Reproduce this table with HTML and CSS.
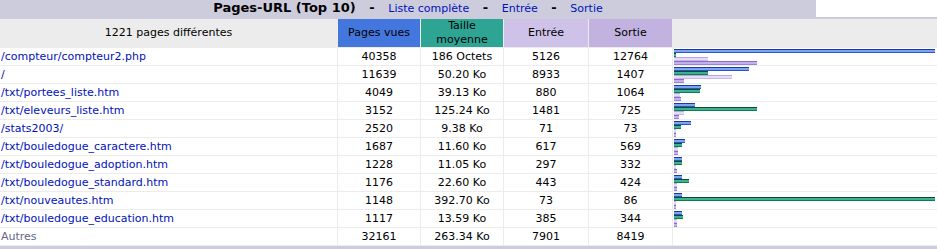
FILE: index.html
```html
<!DOCTYPE html>
<html lang="fr">
<head>
<meta charset="utf-8">
<title>Pages-URL (Top 10)</title>
<link rel="stylesheet" href="styles.css">
</head>
<body>
<div class="section">
  <div class="titlebar">
    <div class="title">Pages-URL (Top 10) &nbsp; - &nbsp; <a href="#">Liste complète</a> &nbsp; - &nbsp; <a href="#">Entrée</a> &nbsp; - &nbsp; <a href="#">Sortie</a></div>
    <div class="blank"></div>
  </div>
  <div class="data">
    <div class="hcell first">1221 pages différentes</div>
    <div class="hcell pages">Pages vues</div>
    <div class="hcell size">Taille<br>moyenne</div>
    <div class="hcell entry">Entrée</div>
    <div class="hcell exit">Sortie</div>
    <div class="hcell graph"></div>

    <div class="cell url"><a href="#">/compteur/compteur2.php</a></div><div class="cell">40358</div><div class="cell">186 Octets</div><div class="cell">5126</div><div class="cell">12764</div>
    <div class="cell bars"><span class="bar bp" style="width:261px"></span><span class="bar bk" style="width:2px"></span><span class="bar be" style="width:34px"></span><span class="bar bx" style="width:83px"></span></div>

    <div class="cell url"><a href="#">/</a></div><div class="cell">11639</div><div class="cell">50.20 Ko</div><div class="cell">8933</div><div class="cell">1407</div>
    <div class="cell bars"><span class="bar bp" style="width:75px"></span><span class="bar bk" style="width:34px"></span><span class="bar be" style="width:58px"></span><span class="bar bx" style="width:10px"></span></div>

    <div class="cell url"><a href="#">/txt/portees_liste.htm</a></div><div class="cell">4049</div><div class="cell">39.13 Ko</div><div class="cell">880</div><div class="cell">1064</div>
    <div class="cell bars"><span class="bar bp" style="width:27px"></span><span class="bar bk" style="width:26px"></span><span class="bar be" style="width:6px"></span><span class="bar bx" style="width:7px"></span></div>

    <div class="cell url"><a href="#">/txt/eleveurs_liste.htm</a></div><div class="cell">3152</div><div class="cell">125.24 Ko</div><div class="cell">1481</div><div class="cell">725</div>
    <div class="cell bars"><span class="bar bp" style="width:21px"></span><span class="bar bk" style="width:83px"></span><span class="bar be" style="width:10px"></span><span class="bar bx" style="width:5px"></span></div>

    <div class="cell url"><a href="#">/stats2003/</a></div><div class="cell">2520</div><div class="cell">9.38 Ko</div><div class="cell">71</div><div class="cell">73</div>
    <div class="cell bars"><span class="bar bp" style="width:17px"></span><span class="bar bk" style="width:7px"></span><span class="bar be" style="width:2px"></span><span class="bar bx" style="width:2px"></span></div>

    <div class="cell url"><a href="#">/txt/bouledogue_caractere.htm</a></div><div class="cell">1687</div><div class="cell">11.60 Ko</div><div class="cell">617</div><div class="cell">569</div>
    <div class="cell bars"><span class="bar bp" style="width:11px"></span><span class="bar bk" style="width:8px"></span><span class="bar be" style="width:4px"></span><span class="bar bx" style="width:4px"></span></div>

    <div class="cell url"><a href="#">/txt/bouledogue_adoption.htm</a></div><div class="cell">1228</div><div class="cell">11.05 Ko</div><div class="cell">297</div><div class="cell">332</div>
    <div class="cell bars"><span class="bar bp" style="width:8px"></span><span class="bar bk" style="width:8px"></span><span class="bar be" style="width:2px"></span><span class="bar bx" style="width:3px"></span></div>

    <div class="cell url"><a href="#">/txt/bouledogue_standard.htm</a></div><div class="cell">1176</div><div class="cell">22.60 Ko</div><div class="cell">443</div><div class="cell">424</div>
    <div class="cell bars"><span class="bar bp" style="width:8px"></span><span class="bar bk" style="width:15px"></span><span class="bar be" style="width:3px"></span><span class="bar bx" style="width:3px"></span></div>

    <div class="cell url"><a href="#">/txt/nouveautes.htm</a></div><div class="cell">1148</div><div class="cell">392.70 Ko</div><div class="cell">73</div><div class="cell">86</div>
    <div class="cell bars"><span class="bar bp" style="width:8px"></span><span class="bar bk" style="width:261px"></span><span class="bar be" style="width:2px"></span><span class="bar bx" style="width:2px"></span></div>

    <div class="cell url"><a href="#">/txt/bouledogue_education.htm</a></div><div class="cell">1117</div><div class="cell">13.59 Ko</div><div class="cell">385</div><div class="cell">344</div>
    <div class="cell bars"><span class="bar bp" style="width:8px"></span><span class="bar bk" style="width:9px"></span><span class="bar be" style="width:3px"></span><span class="bar bx" style="width:3px"></span></div>

    <div class="cell url other">Autres</div><div class="cell">32161</div><div class="cell">263.34 Ko</div><div class="cell">7901</div><div class="cell">8419</div>
    <div class="cell bars"></div>
  </div>
</div>
</body>
</html>
```
FILE: styles.css
```css
html, body {
  margin: 0;
  padding: 0;
  background: #ffffff;
}
body {
  font-family: "DejaVu Sans", Verdana, sans-serif;
  font-size: 11px;
  color: #000000;
}
a {
  color: #0011bb;
  text-decoration: none;
}
.section {
  width: 937px;
}
.titlebar {
  display: flex;
  height: 17px;
}
.title {
  width: 816px;
  background: #ccccdd;
  text-align: center;
  font-size: 13px;
  font-weight: bold;
  line-height: 16px;
  white-space: nowrap;
}
.title a {
  font-size: 11px;
  font-weight: normal;
}
.blank {
  flex: 1;
  background: #ffffff;
}
.data {
  display: grid;
  grid-template-columns: 338px 83px 83px 85px 84px 1fr;
  grid-auto-rows: 18px;
  grid-template-rows: 29px;
  border-top: 2px solid #ccccdd;
  border-bottom: 3px solid #ccccdd;
  background: #ffffff;
}
.hcell, .cell {
  box-sizing: border-box;
  border-right: 1px solid #ececec;
  border-bottom: 1px solid #ececec;
  text-align: center;
  white-space: nowrap;
  overflow: hidden;
}
.hcell {
  display: flex;
  align-items: center;
  justify-content: center;
  line-height: 14px;
}
.hcell.first { background: #ececec; }
.hcell.pages { background: #4477dd; }
.hcell.size { background: #2ea495; }
.hcell.entry { background: #cec2e8; }
.hcell.exit { background: #c1b2e0; }
.hcell.graph { background: #ececec; border-right: 0; }
.cell {
  line-height: 18px;
}
.cell.url {
  text-align: left;
  padding-left: 1px;
}
.cell.other {
  color: #666688;
}
.cell.bars {
  border-right: 0;
  border-left: 1px solid #ececec;
  margin-left: -1px;
  padding: 1px 0 0 1px;
  display: flex;
  flex-direction: column;
  align-items: flex-start;
}
.bar {
  display: block;
  height: 4px;
  flex: none;
}
.bp { background: linear-gradient(#1c3a96 0 25%, #7aa4f4 25% 75%, #2c55c8 75%); }
.bk { background: linear-gradient(#0b4a2e 0 25%, #3cb48a 25% 75%, #147a55 75%); }
.be { background: linear-gradient(#b9a8e0 0 25%, #e4dcf6 25% 75%, #c7b9ea 75%); }
.bx { background: linear-gradient(#8a6cc8 0 25%, #c4b0ec 25% 75%, #9c82d4 75%); }
```
